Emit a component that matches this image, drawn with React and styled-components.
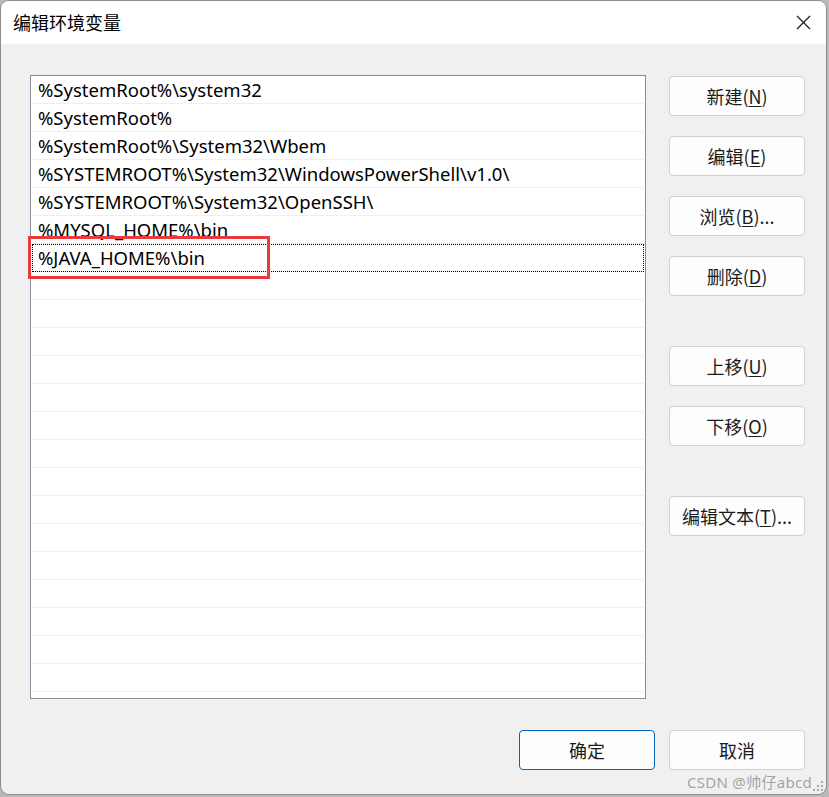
import React from "react";
import styled, { createGlobalStyle } from "styled-components";

const GlobalStyle = createGlobalStyle`
  html, body {
    margin: 0;
    padding: 0;
    background: #b9b9b9;
  }
  body {
    font-family: "Noto Sans", "Noto Sans CJK SC", sans-serif;
  }
`;

const Desktop = styled.div`
  width: 829px;
  height: 797px;
  padding: 1px 3px 3px 1px;
  box-sizing: border-box;
  display: flex;
`;

const Window = styled.div`
  position: relative;
  flex: 1;
  display: flex;
  flex-direction: column;
  background: #f0f0f0;
  border-radius: 8px;
  box-shadow: 0 0 0 1px #8c8c8c;
  overflow: hidden;
`;

const TitleBar = styled.div`
  height: 43px;
  flex-shrink: 0;
  background: #fff;
  display: flex;
  align-items: center;
  justify-content: space-between;
  padding: 0 15px 0 12px;
`;

const Title = styled.div`
  font-family: "Noto Sans CJK SC", sans-serif;
  font-size: 18px;
  color: #000;
  margin-top: -2px;
`;

const CloseBtn = styled.div`
  width: 16px;
  height: 16px;
  display: flex;
  align-items: center;
  justify-content: center;
  svg {
    display: block;
  }
`;

const Body = styled.div`
  position: relative;
  flex: 1;
  display: flex;
  flex-direction: column;
  padding: 31px 21px 24px 29px;
`;

const Main = styled.div`
  display: flex;
  gap: 23px;
`;

const ListBox = styled.div`
  width: 616px;
  height: 624px;
  box-sizing: border-box;
  border: 1px solid #8a8a9a;
  background: #fff;
  padding: 0 1px;
  overflow: hidden;
`;

const Row = styled.div`
  height: 27px;
  border-bottom: 1px solid #efefef;
  display: flex;
  align-items: center;
  padding-left: 6px;
  font-family: "Noto Sans", "Noto Sans CJK SC", sans-serif;
  font-size: 18.5px;
  color: #000;
  white-space: nowrap;
  box-sizing: content-box;
  outline: ${(p) => (p.$focused ? "1px dotted #000" : "none")};
  outline-offset: -1px;
`;

const Side = styled.div`
  display: flex;
  flex-direction: column;
  gap: 20px;
  padding-top: 1px;
`;

const Btn = styled.button`
  width: 136px;
  height: 40px;
  box-sizing: border-box;
  background: #fdfdfd;
  border: 1px solid ${(p) => (p.$primary ? "#0067c0" : "#d0d0d0")};
  border-radius: 4px;
  font-family: "Noto Sans CJK SC", sans-serif;
  font-size: 18px;
  color: #1b1b1b;
  padding: 0;
  margin-top: ${(p) => (p.$gapBefore ? "30px" : "0")};
  display: flex;
  align-items: center;
  justify-content: center;
  u {
    text-decoration: underline;
    text-underline-offset: 2px;
  }
`;

const Footer = styled.div`
  margin-top: auto;
  display: flex;
  justify-content: flex-end;
  gap: 14px;
`;

const Highlight = styled.div`
  position: absolute;
  left: 27px;
  top: 192px;
  width: 242px;
  height: 43px;
  box-sizing: border-box;
  border: 3px solid #ea3a3e;
  pointer-events: none;
`;

const Watermark = styled.div`
  position: absolute;
  right: 14px;
  bottom: 2px;
  font-family: "Noto Sans", "Noto Sans CJK SC", sans-serif;
  font-size: 15px;
  letter-spacing: 0.3px;
  color: rgba(128, 128, 128, 0.7);
  white-space: nowrap;
`;

const Grip = styled.div`
  position: absolute;
  right: 3px;
  bottom: 3px;
  width: 10px;
  height: 10px;
  display: grid;
  grid-template-columns: repeat(3, 2px);
  grid-template-rows: repeat(3, 2px);
  gap: 2px;
  justify-content: end;
  align-content: end;
`;

const Dot = styled.span`
  width: 2px;
  height: 2px;
  background: ${(p) => (p.$on ? "#a8a8a8" : "transparent")};
`;

const paths = [
  "%SystemRoot%\\system32",
  "%SystemRoot%",
  "%SystemRoot%\\System32\\Wbem",
  "%SYSTEMROOT%\\System32\\WindowsPowerShell\\v1.0\\",
  "%SYSTEMROOT%\\System32\\OpenSSH\\",
  "%MYSQL_HOME%\\bin",
  "%JAVA_HOME%\\bin",
];

const sideButtons = [
  { label: "新建", key: "N" },
  { label: "编辑", key: "E" },
  { label: "浏览", key: "B", tail: "..." },
  { label: "删除", key: "D" },
  { label: "上移", key: "U", gap: true },
  { label: "下移", key: "O" },
  { label: "编辑文本", key: "T", tail: "...", gap: true },
];

export default function App() {
  const rows = [];
  for (let i = 0; i < 23; i++) rows.push(paths[i] || "");

  return (
    <>
      <GlobalStyle />
      <Desktop>
        <Window>
          <TitleBar>
            <Title>编辑环境变量</Title>
            <CloseBtn>
              <svg width="15" height="15" viewBox="0 0 15 15">
                <path d="M1 1 L14 14 M14 1 L1 14" stroke="#1a1a1a" strokeWidth="1.2" fill="none" />
              </svg>
            </CloseBtn>
          </TitleBar>
          <Body>
            <Main>
              <ListBox>
                {rows.map((r, i) => (
                  <Row key={i} $focused={i === 6}>
                    {r}
                  </Row>
                ))}
              </ListBox>
              <Side>
                {sideButtons.map((b) => (
                  <Btn key={b.label} $gapBefore={b.gap}>
                    {b.label}(<u>{b.key}</u>){b.tail || ""}
                  </Btn>
                ))}
              </Side>
            </Main>
            <Footer>
              <Btn $primary>确定</Btn>
              <Btn>取消</Btn>
            </Footer>
            <Highlight />
          </Body>
          <Watermark>CSDN @帅仔abcd</Watermark>
          <Grip>
            {[0, 0, 1, 0, 1, 1, 1, 1, 1].map((on, i) => (
              <Dot key={i} $on={on} />
            ))}
          </Grip>
        </Window>
      </Desktop>
    </>
  );
}
